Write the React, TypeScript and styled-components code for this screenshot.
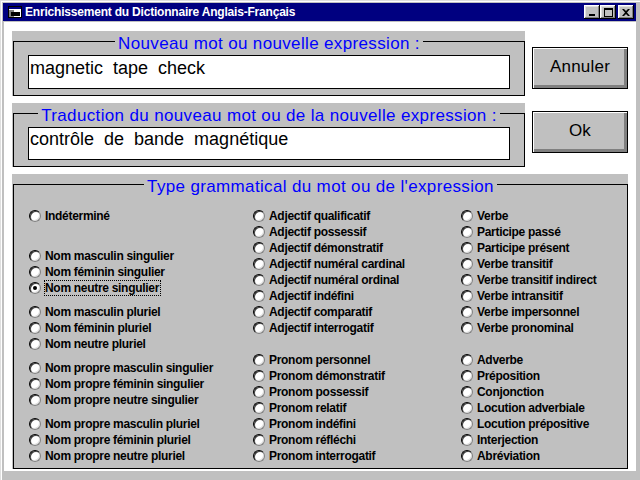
import React from 'react';
import styled, { createGlobalStyle } from 'styled-components';

const GlobalStyle = createGlobalStyle`
  html, body {
    margin: 0;
    padding: 0;
    background: #c0c0c0;
  }
  * {
    box-sizing: border-box;
  }
`;

const FONT = `'Liberation Sans', Arial, sans-serif`;

type Group = { gap: number; items: string[] };

const columns: Group[][] = [
  [
    { gap: 0, items: ['Indéterminé'] },
    { gap: 24, items: ['Nom masculin singulier', 'Nom féminin singulier', 'Nom neutre singulier'] },
    { gap: 8, items: ['Nom masculin pluriel', 'Nom féminin pluriel', 'Nom neutre pluriel'] },
    {
      gap: 8,
      items: ['Nom propre masculin singulier', 'Nom propre féminin singulier', 'Nom propre neutre singulier'],
    },
    { gap: 8, items: ['Nom propre masculin pluriel', 'Nom propre féminin pluriel', 'Nom propre neutre pluriel'] },
  ],
  [
    {
      gap: 0,
      items: [
        'Adjectif qualificatif',
        'Adjectif possessif',
        'Adjectif démonstratif',
        'Adjectif numéral cardinal',
        'Adjectif numéral ordinal',
        'Adjectif indéfini',
        'Adjectif comparatif',
        'Adjectif interrogatif',
      ],
    },
    {
      gap: 16,
      items: [
        'Pronom personnel',
        'Pronom démonstratif',
        'Pronom possessif',
        'Pronom relatif',
        'Pronom indéfini',
        'Pronom réfléchi',
        'Pronom interrogatif',
      ],
    },
  ],
  [
    {
      gap: 0,
      items: [
        'Verbe',
        'Participe passé',
        'Participe présent',
        'Verbe transitif',
        'Verbe transitif indirect',
        'Verbe intransitif',
        'Verbe impersonnel',
        'Verbe pronominal',
      ],
    },
    {
      gap: 16,
      items: [
        'Adverbe',
        'Préposition',
        'Conjonction',
        'Locution adverbiale',
        'Locution prépositive',
        'Interjection',
        'Abréviation',
      ],
    },
  ],
];

const SELECTED = 'Nom neutre singulier';

const App: React.FC = () => {
  return (
    <>
      <GlobalStyle />
      <Window>
        <TitleBar>
          <AppIcon width="14" height="12" viewBox="0 0 14 12">
            <rect x="0.5" y="0.5" width="13" height="11" fill="#fff" stroke="#000" />
            <rect x="1" y="1" width="12" height="2" fill="#000080" />
            <rect x="1" y="4" width="5" height="7" fill="#808080" />
            <rect x="3" y="6" width="9" height="4" fill="#000" />
          </AppIcon>
          <TitleText>Enrichissement du Dictionnaire Anglais-Français</TitleText>
          <CaptionButtons>
            <CaptionButton>
              <svg width="8" height="7" viewBox="0 0 8 7">
                <rect x="1" y="5" width="6" height="2" fill="#000" />
              </svg>
            </CaptionButton>
            <CaptionButton>
              <svg width="9" height="9" viewBox="0 0 9 9">
                <rect x="0.5" y="0.5" width="8" height="8" fill="none" stroke="#000" />
                <rect x="0" y="0" width="9" height="2" fill="#000" />
              </svg>
            </CaptionButton>
            <CloseButton>
              <svg width="8" height="7" viewBox="0 0 8 7">
                <path d="M0 0h2l2 2 2-2h2L5 3.5 8 7H6L4 5 2 7H0l3-3.5z" fill="#000" />
              </svg>
            </CloseButton>
          </CaptionButtons>
        </TitleBar>

        <Client>
          <Panel>
            <Frame>
              <Legend>Nouveau mot ou nouvelle expression :</Legend>
              <TextBox readOnly defaultValue="magnetic tape check" />
            </Frame>
          </Panel>
          <DialogButton $top={16}>Annuler</DialogButton>

          <Panel>
            <Frame>
              <Legend>Traduction du nouveau mot ou de la nouvelle expression :</Legend>
              <TextBox readOnly $height={33} defaultValue="contrôle de bande magnétique" />
            </Frame>
          </Panel>
          <DialogButton $top={8}>Ok</DialogButton>

          <WidePanel>
            <Frame>
              <Legend>Type grammatical du mot ou de l'expression</Legend>
              <RadioGrid>
                {columns.map((col, ci) => (
                  <Column key={ci}>
                    {col.map((group, gi) => (
                      <RadioGroup key={gi} $gap={group.gap}>
                        {group.items.map((label) => (
                          <RadioRow key={label}>
                            <RadioCircle $checked={label === SELECTED} />
                            <RadioLabel $focused={label === SELECTED}>{label}</RadioLabel>
                          </RadioRow>
                        ))}
                      </RadioGroup>
                    ))}
                  </Column>
                ))}
              </RadioGrid>
            </Frame>
          </WidePanel>
        </Client>
      </Window>
    </>
  );
};

const Window = styled.div`
  width: 640px;
  height: 480px;
  background: #c0c0c0;
  padding: 3px 4px 9px 3px;
  display: flex;
  flex-direction: column;
  box-shadow: inset 1px 1px #dfdfdf, inset 2px 2px #fff;
  overflow: hidden;
`;

const TitleBar = styled.div`
  height: 18px;
  background: #000080;
  display: flex;
  align-items: center;
  padding: 0 2px 0 5px;
  flex-shrink: 0;
`;

const AppIcon = styled.svg`
  flex-shrink: 0;
  margin-right: 3px;
`;

const TitleText = styled.div`
  flex: 1;
  color: #fff;
  font-family: ${FONT};
  font-weight: bold;
  font-size: 12px;
  letter-spacing: -0.2px;
  white-space: nowrap;
`;

const CaptionButtons = styled.div`
  display: flex;
  align-items: center;
`;

const CaptionButton = styled.div`
  width: 16px;
  height: 14px;
  background: #c0c0c0;
  display: flex;
  align-items: center;
  justify-content: center;
  padding-top: 1px;
  box-shadow: inset -1px -1px #000, inset 1px 1px #fff, inset -2px -2px #808080, inset 2px 2px #dfdfdf;
`;

const CloseButton = styled(CaptionButton)`
  margin-left: 2px;
`;

const Client = styled.div`
  flex: 1;
  margin: 1px 0 0 1px;
  background: #fff;
  padding: 9px 7px 0 8px;
  display: grid;
  grid-template-columns: 513px 96px;
  grid-template-rows: 65px 64px 295px;
  column-gap: 7px;
  row-gap: 7px;
  align-content: start;
`;

const Panel = styled.div`
  background: #c0c0c0;
  padding-left: 1px;
  display: flex;
`;

const WidePanel = styled(Panel)`
  grid-column: 1 / span 2;
`;

const Frame = styled.fieldset`
  flex: 1;
  min-width: 0;
  margin: 0;
  border: 1px solid #000;
  padding: 4px 14px 0 14px;
`;

const Legend = styled.legend`
  margin: 0 auto;
  padding: 6px 3px 0;
  font-family: ${FONT};
  font-size: 17px;
  line-height: 14px;
  letter-spacing: 0.35px;
  color: #0000ff;
  white-space: nowrap;
`;

const TextBox = styled.input<{ $height?: number }>`
  display: block;
  width: 100%;
  height: ${(p) => p.$height ?? 34}px;
  border: 1px solid #000;
  background: #fff;
  padding: 0 0 8px 1px;
  margin: 0;
  outline: none;
  font-family: ${FONT};
  font-size: 18px;
  word-spacing: 5px;
  color: #000;
`;

const DialogButton = styled.div<{ $top: number }>`
  align-self: start;
  margin-top: ${(p) => p.$top}px;
  height: 42px;
  background: #c0c0c0;
  border: 1px solid #000;
  box-shadow: inset 1px 1px #fff, inset -3px -3px #808080;
  display: flex;
  align-items: center;
  justify-content: center;
  padding-bottom: 2px;
  font-family: ${FONT};
  font-size: 17px;
  letter-spacing: 0.2px;
  color: #000;
`;

const RadioGrid = styled.div`
  display: grid;
  grid-template-columns: 224px 208px 1fr;
  padding: 10px 0 0 1px;
`;

const Column = styled.div`
  display: flex;
  flex-direction: column;
`;

const RadioGroup = styled.div<{ $gap: number }>`
  display: flex;
  flex-direction: column;
  margin-top: ${(p) => p.$gap}px;
`;

const RadioRow = styled.div`
  height: 16px;
  display: flex;
  align-items: center;
`;

const RadioCircle = styled.span<{ $checked: boolean }>`
  position: relative;
  width: 12px;
  height: 12px;
  flex-shrink: 0;
  border-radius: 50%;
  background: #fff;
  border: 1px solid;
  border-color: #000 #808080 #808080 #000;
  box-shadow: inset 1px 1px #404040, inset -1px -1px #dfdfdf;

  &::after {
    content: '';
    display: ${(p) => (p.$checked ? 'block' : 'none')};
    position: absolute;
    left: 3px;
    top: 3px;
    width: 4px;
    height: 4px;
    border-radius: 50%;
    background: #000;
  }
`;

const RadioLabel = styled.span<{ $focused: boolean }>`
  margin-left: 3px;
  border: 1px dotted ${(p) => (p.$focused ? '#000' : 'transparent')};
  padding: 0 1px 0 0;
  line-height: 14px;
  font-family: ${FONT};
  font-weight: bold;
  font-size: 12px;
  letter-spacing: -0.3px;
  color: #000;
  white-space: nowrap;
`;

export default App;
